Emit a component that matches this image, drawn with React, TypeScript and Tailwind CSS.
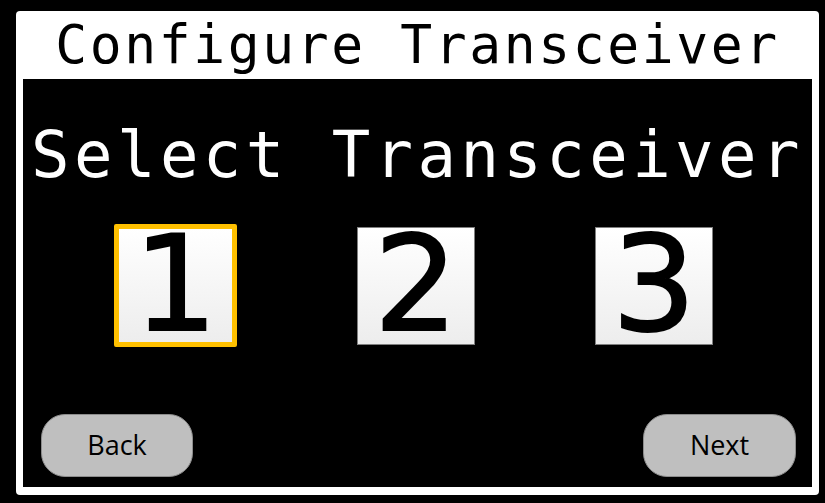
import React, { useState } from 'react';

const mono = "font-['DejaVu_Sans_Mono',monospace]";

const App: React.FC = () => {
  const [selected, setSelected] = useState(1);

  return (
    <div className="w-[825px] h-[503px] bg-black pt-[11px] pl-[16px] pr-[6px] pb-[8px]">
      <div className="w-full h-full bg-white rounded-[4px] px-[7px] pb-[8px] flex flex-col">
        {/* header */}
        <div className="h-[68px] flex items-center justify-center">
          <h1 className={`${mono} text-[53px] leading-none tracking-[2.6px] text-black mt-[-2px]`}>
            Configure Transceiver
          </h1>
        </div>

        {/* main panel */}
        <div className="flex-1 bg-black flex flex-col">
          <div className="h-[145px] flex items-center justify-center">
            <h2 className={`${mono} text-[64px] leading-none tracking-[4.4px] text-white mt-[6px] whitespace-nowrap`}>
              Select Transceiver
            </h2>
          </div>

          <div className="flex items-center pl-[91px] gap-[120px] h-[123px]">
            {[1, 2, 3].map((n) => (
              <button
                key={n}
                onClick={() => setSelected(n)}
                className={
                  n === selected
                    ? 'w-[123px] h-[123px] border-[5px] border-[#FFC000] rounded-[2px] bg-gradient-to-b from-white to-[#ededed] flex items-center justify-center'
                    : 'w-[118px] h-[118px] border border-[#7f7f7f] bg-gradient-to-b from-white to-[#ededed] flex items-center justify-center'
                }
              >
                <span className="font-['DejaVu_Sans',sans-serif] text-[132px] leading-none text-black mt-[-4px] [-webkit-text-stroke:2px_black]">
                  {n}
                </span>
              </button>
            ))}
          </div>

          <div className="mt-auto flex justify-between pl-[18px] pr-[16px] pb-[10px]">
            <button className="w-[152px] h-[63px] rounded-[24px] bg-[#bfbfbf] border border-[#8c8c8c] font-['Open_Sans',sans-serif] text-[27px] text-black">
              Back
            </button>
            <button className="w-[153px] h-[63px] rounded-[24px] bg-[#bfbfbf] border border-[#8c8c8c] font-['Open_Sans',sans-serif] text-[27px] text-black">
              Next
            </button>
          </div>
        </div>
      </div>
    </div>
  );
};

export default App;
